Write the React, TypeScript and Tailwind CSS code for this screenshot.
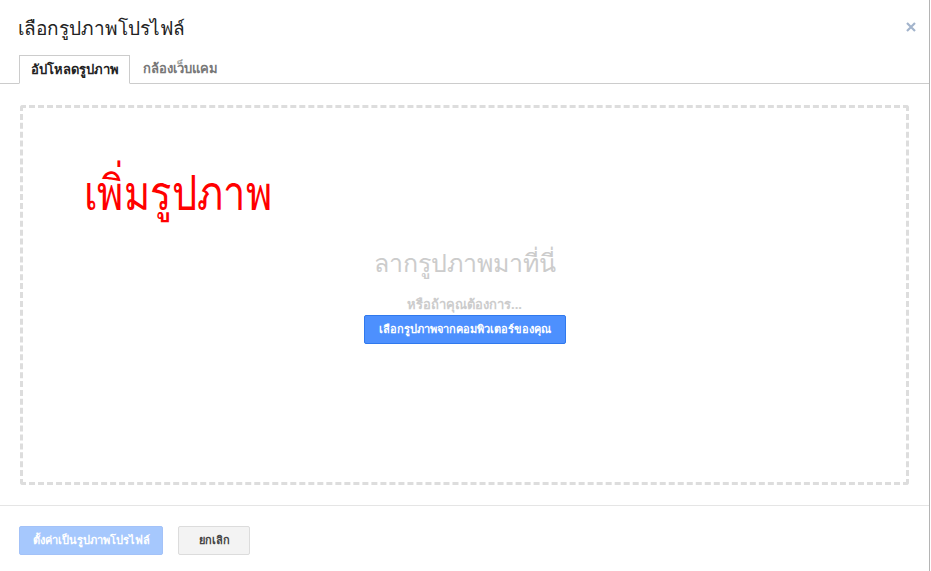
export default function App() {
  return (
    <div
      className="h-[571px] w-[931px] bg-white text-[#222]"
      style={{ fontFamily: '"Noto Sans", "DejaVu Sans", sans-serif' }}
    >
      <div className="flex h-full w-[930px] flex-col border-r border-[#b4b4b4]">
        {/* header */}
        <div className="relative px-[18px] pt-[14px]">
          <h1 className="text-[19px] leading-[28px] font-normal">เลือกรูปภาพโปรไฟล์</h1>
          <button className="absolute right-[13px] top-[22px] text-[#a3b4cc]">
            <svg width="10" height="10" viewBox="0 0 10 10" stroke="currentColor" strokeWidth="2.2">
              <path d="M1 1l8 8M9 1l-8 8" />
            </svg>
          </button>
        </div>

        {/* tabs */}
        <div className="mt-[13px] flex border-b border-[#ccc] pl-[19px]">
          <div className="-mb-px flex h-[29px] w-[111px] items-center justify-center border border-[#ccc] border-b-white bg-white text-[13px] font-bold text-[#222]">
            อัปโหลดรูปภาพ
          </div>
          <div className="flex h-[28px] items-center px-[13px] text-[13px] font-bold text-[#777]">
            กล้องเว็บแคม
          </div>
        </div>

        {/* body */}
        <div className="px-[20px] pb-[20px] pt-[21px]">
          <div className="relative flex h-[380px] w-[889px] flex-col items-center rounded-[3px] border-[3px] border-dashed border-[#ddd] pt-[137px]">
            <span
              className="absolute left-[61px] top-[56px] origin-left scale-x-[0.83] text-[48px] leading-[60px] text-[#ff0000]"
              style={{ fontFamily: '"Liberation Serif", "DejaVu Serif", serif' }}
            >
              เพิ่มรูปภาพ
            </span>
            <div className="text-[25px] leading-[34px] text-[#ccc]">ลากรูปภาพมาที่นี่</div>
            <div className="mt-[16px] text-[13px] font-bold leading-[18px] text-[#ccc]">หรือถ้าคุณต้องการ...</div>
            <button className="mt-[2px] h-[29px] rounded-[2px] border border-[#3079ed] bg-[#4d90fe] px-[14px] text-[11px] font-bold text-white">
              เลือกรูปภาพจากคอมพิวเตอร์ของคุณ
            </button>
          </div>
        </div>

        {/* footer */}
        <div className="flex gap-[15px] border-t border-[#e5e5e5] px-[19px] pt-[20px]">
          <button className="h-[29px] w-[144px] rounded-[2px] border border-[#a3c2f8] bg-[#a6c8fd] text-[11px] font-bold text-white">
            ตั้งค่าเป็นรูปภาพโปรไฟล์
          </button>
          <button className="h-[29px] w-[72px] rounded-[2px] border border-[#dcdcdc] bg-[#f3f3f3] text-[11px] font-bold text-[#444]">
            ยกเลิก
          </button>
        </div>
      </div>
    </div>
  );
}
